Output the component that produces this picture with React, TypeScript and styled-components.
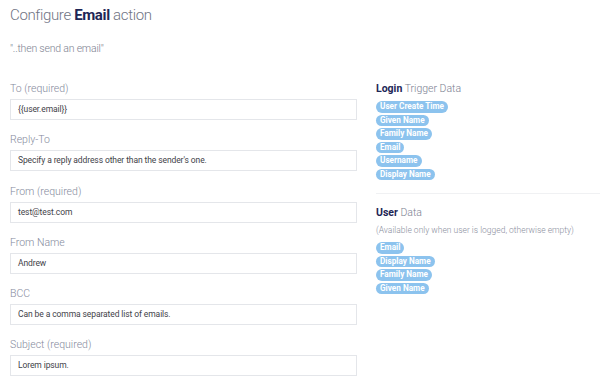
import { createGlobalStyle, styled } from "styled-components";

const GlobalStyle = createGlobalStyle`
  html, body {
    margin: 0;
    padding: 0;
    background: #ffffff;
    font-family: Roboto, "Liberation Sans", sans-serif;
  }
`;

const fields = [
  { label: "To (required)", value: "{{user.email}}" },
  { label: "Reply-To", value: "Specify a reply address other than the sender's one." },
  { label: "From (required)", value: "test@test.com" },
  { label: "From Name", value: "Andrew" },
  { label: "BCC", value: "Can be a comma separated list of emails." },
  { label: "Subject (required)", value: "Lorem ipsum." },
];

const loginTags = ["User Create Time", "Given Name", "Family Name", "Email", "Username", "Display Name"];
const userTags = ["Email", "Display Name", "Family Name", "Given Name"];

function App() {
  return (
    <>
      <GlobalStyle />
      <Page>
        <Title>
          Configure <strong>Email</strong> action
        </Title>
        <Subtitle>"..then send an email"</Subtitle>
        <Columns>
          <Form>
            {fields.map((f) => (
              <Field key={f.label}>
                <Label>{f.label}</Label>
                <Input>{f.value}</Input>
              </Field>
            ))}
          </Form>
          <Side>
            <Section>
              <SectionTitle>
                <strong>Login</strong> Trigger Data
              </SectionTitle>
              <Tags>
                {loginTags.map((t) => (
                  <Tag key={t}>{t}</Tag>
                ))}
              </Tags>
            </Section>
            <Divider />
            <Section>
              <SectionTitle>
                <strong>User</strong> Data
              </SectionTitle>
              <Note>(Available only when user is logged, otherwise empty)</Note>
              <Tags>
                {userTags.map((t) => (
                  <Tag key={t}>{t}</Tag>
                ))}
              </Tags>
            </Section>
          </Side>
        </Columns>
      </Page>
    </>
  );
}

const Page = styled.div`
  width: 600px;
  height: 379px;
  overflow: hidden;
  padding: 5px 0 0 10px;
  box-sizing: border-box;
`;

const Title = styled.h1`
  margin: 0;
  font-size: 15px;
  letter-spacing: -0.35px;
  font-weight: 300;
  color: #707484;
  line-height: 20px;

  strong {
    font-weight: 700;
    color: #1e2656;
  }
`;

const Subtitle = styled.div`
  margin-top: 17px;
  font-size: 10.5px;
  letter-spacing: -0.2px;
  font-weight: 300;
  color: #7d8190;
  line-height: 14px;
`;

const Columns = styled.div`
  display: flex;
  margin-top: 26px;
`;

const Form = styled.div`
  width: 347px;
  display: flex;
  flex-direction: column;
  gap: 13.3px;
`;

const Field = styled.div`
  display: flex;
  flex-direction: column;
  gap: 4px;
`;

const Label = styled.div`
  font-size: 10.5px;
  font-weight: 300;
  color: #858a9c;
  line-height: 13px;
`;

const Input = styled.div`
  height: 21px;
  box-sizing: border-box;
  border: 1px solid #e4e6ea;
  padding: 0 7px;
  font-size: 8.5px;
  letter-spacing: -0.1px;
  color: #3f4249;
  line-height: 19px;
  white-space: nowrap;
`;

const Side = styled.div`
  flex: 1;
  margin-left: 19px;
  display: flex;
  flex-direction: column;
`;

const Section = styled.div`
  display: flex;
  flex-direction: column;
`;

const SectionTitle = styled.div`
  font-size: 10.5px;
  font-weight: 300;
  color: #7b8091;
  line-height: 13px;

  strong {
    font-weight: 700;
    color: #1e2656;
  }
`;

const Note = styled.div`
  margin-top: 5px;
  font-size: 8.5px;
  font-weight: 300;
  color: #8a8e9d;
  line-height: 12px;
`;

const Tags = styled.div`
  margin-top: 6px;
  display: flex;
  flex-direction: column;
  align-items: flex-start;
  gap: 2px;
`;

const Tag = styled.span`
  display: inline-block;
  background: #8cc3ee;
  color: #ffffff;
  font-size: 8.2px;
  font-weight: 700;
  line-height: 11.5px;
  padding: 0 4px;
  border-radius: 6px;
`;

const Divider = styled.div`
  height: 1px;
  background: #f0f1f3;
  margin: 13px 0 12px;
`;

export default App;
